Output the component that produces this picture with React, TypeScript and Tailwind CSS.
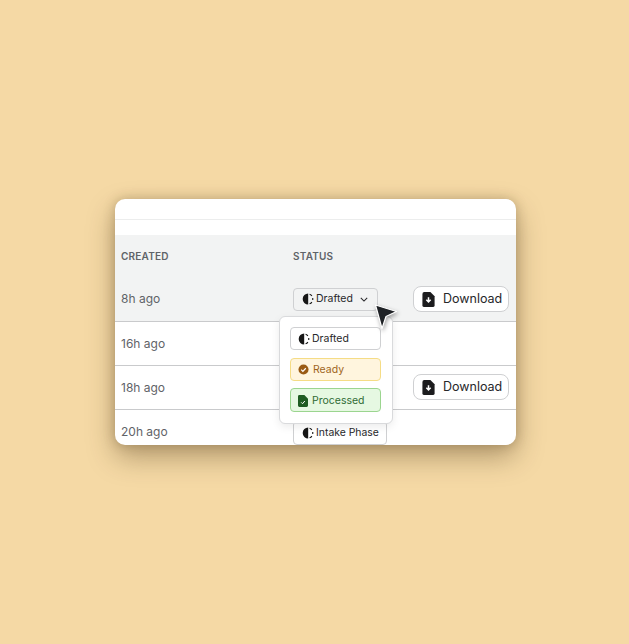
import React from 'react';

const HalfCircle = ({ className = '' }: { className?: string }) => (
  <svg viewBox="0 0 12 12" className={className} fill="none">
    <path d="M6.200 .5a5.500 5.500 0 0 0 0 11z" fill="#161616" />
    <path d="M7.600 1.200a5 5 0 0 1 2.300 1.700M10.700 5a5 5 0 0 1 0 2M9.900 9.100a5 5 0 0 1-2.300 1.700" stroke="#161616" strokeWidth="1.100" />
  </svg>
);

const FileDownload = () => (
  <svg viewBox="0 0 13 16" className="w-[13px] h-[15px]">
    <path d="M2 0h6.500L13 4.500V14a2 2 0 0 1-2 2H2a2 2 0 0 1-2-2V2a2 2 0 0 1 2-2z" fill="#1c1c1e" />
    <path d="M6.500 5.500v4.500M4.200 8.200l2.300 2.400 2.300-2.400" stroke="#fff" strokeWidth="1.600" fill="none" />
  </svg>
);

const DownloadButton = () => (
  <button className="w-[96px] h-[26px] ml-auto mr-[7px] -mt-[1px] flex items-center gap-[8px] pl-[8px] bg-white border border-[#cfd0d2] rounded-[8px] text-[12.500px] text-[#27272a]">
    <FileDownload />
    <span>Download</span>
  </button>
);

const Row = ({ age, shaded, children }: { age: string; shaded?: boolean; children?: React.ReactNode }) => (
  <div className={`h-[44px] flex items-center border-b border-[#c9cacc] ${shaded ? 'bg-[#f2f3f3]' : 'bg-white'}`}>
    <div className={`w-[178px] pl-[6px] text-[12px] text-[#5f6368] ${shaded ? '-mt-[1px]' : ''}`}>{age}</div>
    {children}
  </div>
);

export default function App() {
  return (
    <div className="w-[629px] h-[644px] bg-[#f5d9a5] pl-[115px] pt-[199px] font-['Inter',sans-serif]">
      <div className="relative w-[401px] h-[246px] bg-white rounded-[10px] shadow-[0_12px_28px_rgba(70,50,20,0.38),0_0_12px_rgba(70,50,20,0.25)]">
        <div className="h-[246px] rounded-[10px] overflow-hidden">
          <div className="h-[21px] border-b border-[#eceded]" />
          <div className="h-[15px]" />
          <div className="h-[43px] bg-[#f2f3f3] flex items-center pb-[1px] text-[10px] font-semibold tracking-[0.2px] text-[#5f6368]">
            <div className="w-[178px] pl-[6px]">CREATED</div>
            <div>STATUS</div>
          </div>
          <Row age="8h ago" shaded>
            <div className="-mt-[1px] w-[85px] h-[23px] flex items-center gap-[2px] pl-[8px] border border-[#cfd0d2] rounded-[4px] text-[10.500px] text-[#27272a]">
              <HalfCircle className="w-[12px] h-[12px]" />
              <span>Drafted</span>
              <svg viewBox="0 0 10 6" className="w-[8px] h-[5px] ml-[5px]" fill="none">
                <path d="M1 1l4 4 4-4" stroke="#27272a" strokeWidth="1.300" />
              </svg>
            </div>
            <DownloadButton />
          </Row>
          <Row age="16h ago" />
          <Row age="18h ago">
            <div className="w-[85px]" />
            <DownloadButton />
          </Row>
          <div className="h-[36px] flex items-start">
            <div className="w-[178px] pl-[6px] pt-[13px] text-[12px] text-[#5f6368]">20h ago</div>
            <div className="mt-[11px] h-[24px] w-[94px] flex items-center gap-[2px] pl-[8px] bg-white border border-[#cfd0d2] rounded-[4px] text-[10.400px] text-[#27272a]">
              <HalfCircle className="w-[12px] h-[12px]" />
              <span>Intake Phase</span>
            </div>
          </div>
        </div>

        <div className="absolute left-[164px] top-[117px] w-[114px] h-[108px] bg-white border border-[#d9dadc] rounded-[6px] shadow-[0_3px_8px_rgba(0,0,0,0.08)] flex flex-col gap-[7px] pt-[10px] pl-[10px]">
          <div className="mb-[1px] w-[91px] h-[23px] flex items-center gap-[2px] pl-[7px] border border-[#cfd0d2] rounded-[4px] text-[10.500px] text-[#27272a]">
            <HalfCircle className="w-[12px] h-[12px]" />
            <span>Drafted</span>
          </div>
          <div className="w-[91px] h-[23px] flex items-center gap-[3px] pl-[7px] bg-[#fff5de] border border-[#f5dc85] rounded-[4px] text-[10.500px] text-[#a0651c]">
            <svg viewBox="0 0 12 12" className="w-[11px] h-[11px]">
              <circle cx="6" cy="6" r="5.500" fill="#9a5b13" />
              <path d="M3.500 6.200l1.800 1.800 3.200-3.400" stroke="#fff" strokeWidth="1.300" fill="none" />
            </svg>
            <span className="ml-[1px]">Ready</span>
          </div>
          <div className="w-[91px] h-[24px] flex items-center gap-[3px] pl-[7px] pt-[1px] bg-[#e6f8e2] border border-[#9bd58f] rounded-[4px] text-[10.500px] text-[#2f6b34]">
            <svg viewBox="0 0 11 13" className="w-[10px] h-[12px]">
              <path d="M1.500 0h5.500L11 4v7.500a1.500 1.500 0 0 1-1.500 1.500h-8A1.500 1.500 0 0 1 0 11.500v-10A1.500 1.500 0 0 1 1.500 0z" fill="#1f5c22" />
              <path d="M3.500 8l1.500 1.500 2.500-3" stroke="#fff" strokeWidth="1.100" fill="none" />
            </svg>
            <span className="ml-[1px]">Processed</span>
          </div>
        </div>

        <svg viewBox="0 0 26 28" className="absolute left-[258px] top-[103px] w-[26px] h-[28px] drop-shadow-[1px_2px_2px_rgba(0,0,0,0.35)]">
          <path d="M2.500 3l21 6.500-10.500 5-4 12z" fill="#1f2226" stroke="#fff" strokeWidth="1.200" strokeLinejoin="round" />
        </svg>
      </div>
    </div>
  );
}
